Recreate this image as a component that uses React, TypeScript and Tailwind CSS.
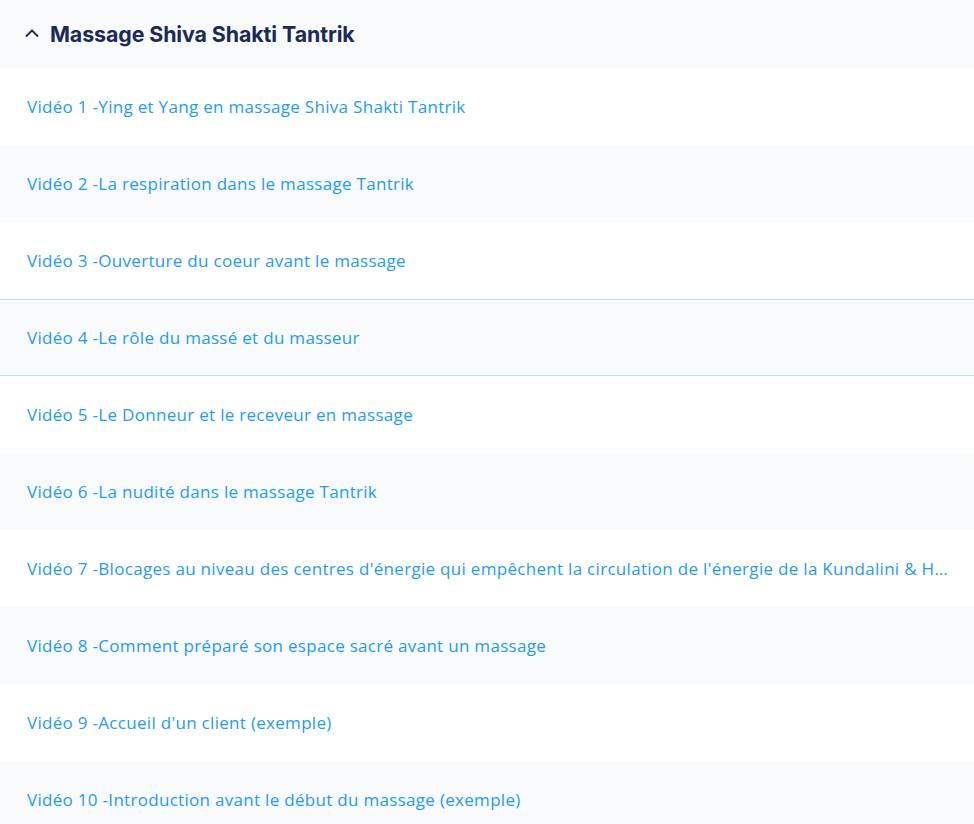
const videos = [
  "Vidéo 1 -Ying et Yang en massage Shiva Shakti Tantrik",
  "Vidéo 2 -La respiration dans le massage Tantrik",
  "Vidéo 3 -Ouverture du coeur avant le massage",
  "Vidéo 4 -Le rôle du massé et du masseur",
  "Vidéo 5 -Le Donneur et le receveur en massage",
  "Vidéo 6 -La nudité dans le massage Tantrik",
  "Vidéo 7 -Blocages au niveau des centres d'énergie qui empêchent la circulation de l'énergie de la Kundalini & Hara",
  "Vidéo 8 -Comment préparé son espace sacré avant un massage",
  "Vidéo 9 -Accueil d'un client (exemple)",
  "Vidéo 10 -Introduction avant le début du massage (exemple)",
];

export default function App() {
  return (
    <div className="w-[974px] bg-white font-['Open_Sans',sans-serif]">
      <div className="h-[68px] bg-[#f8fafc] flex items-center gap-[11px] pl-[25px]">
        <svg width="14" height="14" viewBox="0 0 14 14" fill="none" className="mt-[-2px]">
          <path d="M1.5 10 L7 4.5 L12.5 10" stroke="#1b2a57" strokeWidth="1.8" strokeLinecap="round" strokeLinejoin="round" />
        </svg>
        <h2 className="text-[21.4px] font-bold text-[#1b2a57] font-['Inter',sans-serif] tracking-[-0.1px]">
          Massage Shiva Shakti Tantrik
        </h2>
      </div>
      {videos.map((v, i) => (
        <div
          key={i}
          className={
            (i % 2 === 1 ? "bg-[#f8fafc] " : "bg-white ") +
            (i === 3 ? "border-y border-[#c5dff5] " : "") +
            "h-[77px] flex items-center pl-[27px] pr-[24px]"
          }
        >
          <span className="truncate text-[17px] tracking-[0.3px] text-[#1f9bf4] mt-[1px]">{v}</span>
        </div>
      ))}
    </div>
  );
}
